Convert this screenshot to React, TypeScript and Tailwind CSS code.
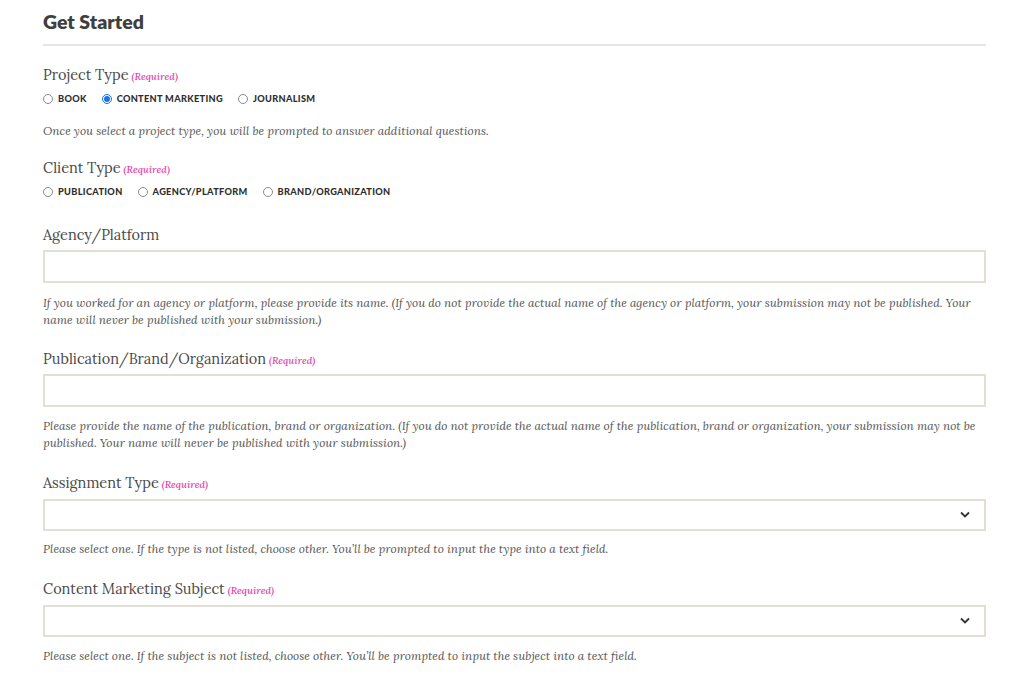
import React from 'react';

const serif = "font-['Lora','DejaVu_Serif','Liberation_Serif',serif]";

const Required = () => (
  <span className="ml-[3px] text-[10px] leading-[10px] italic font-medium text-[#e53aa6]">(Required)</span>
);

const Radio = ({ label, checked }: { label: string; checked?: boolean }) => (
  <label className="flex items-center mr-[15px]">
    <span
      className={`w-[10px] h-[10px] rounded-full border flex items-center justify-center mr-[5px] ${
        checked ? 'border-[#1a73e8]' : 'border-[#8a8a8a]'
      }`}
    >
      {checked && <span className="w-[6px] h-[6px] rounded-full bg-[#1a73e8]" />}
    </span>
    <span className="text-[9.2px] font-black tracking-[0.035em] text-[#2e2e2e] uppercase font-['Lato',sans-serif]">
      {label}
    </span>
  </label>
);

const Label = ({ text, required }: { text: string; required?: boolean }) => (
  <div className={`${serif} text-[14.5px] text-[#4a4a4a] leading-[20px] flex items-baseline`}>
    {text}
    {required && <Required />}
  </div>
);

const Help = ({ children }: { children: React.ReactNode }) => (
  <p className={`${serif} italic text-[11.8px] leading-[17px] text-[#555]`}>{children}</p>
);

const TextInput = () => (
  <div className="h-[33px] border-2 border-[#e2e0d6] bg-white" />
);

const Select = () => (
  <div className="h-[32px] border-2 border-[#e2e0d6] bg-white flex items-center justify-end pr-[14px]">
    <svg width="10" height="7" viewBox="0 0 10 7" fill="none">
      <path d="M1 1.5l4 4 4-4" stroke="#333" strokeWidth="1.8" />
    </svg>
  </div>
);

export default function App() {
  return (
    <div className="w-[1024px] h-[680px] bg-white overflow-hidden px-[43px]">
      <div className="w-[943px]">
        <h2 className="pt-[11px] pb-[11px] text-[19.5px] font-extrabold text-[#3f3f3f] leading-[22px] font-['Lato',sans-serif]">
          Get Started
        </h2>
        <div className="border-t-2 border-[#e5e5e5]" />

        <div className="mt-[19px]">
          <Label text="Project Type" required />
          <div className="flex mt-[7px]">
            <Radio label="Book" />
            <Radio label="Content Marketing" checked />
            <Radio label="Journalism" />
          </div>
          <div className="mt-[16px]">
            <Help>Once you select a project type, you will be prompted to answer additional questions.</Help>
          </div>
        </div>

        <div className="mt-[19px]">
          <Label text="Client Type" required />
          <div className="flex mt-[7px]">
            <Radio label="Publication" />
            <Radio label="Agency/Platform" />
            <Radio label="Brand/Organization" />
          </div>
        </div>

        <div className="mt-[26px]">
          <Label text="Agency/Platform" />
          <div className="mt-[5px]">
            <TextInput />
          </div>
          <div className="mt-[11px]">
            <Help>
              If you worked for an agency or platform, please provide its name. (If you do not provide the actual name of the
              agency or platform, your submission may not be published. Your name will never be published with your
              submission.)
            </Help>
          </div>
        </div>

        <div className="mt-[21px]">
          <Label text="Publication/Brand/Organization" required />
          <div className="mt-[5px]">
            <TextInput />
          </div>
          <div className="mt-[10px]">
            <Help>
              Please provide the name of the publication, brand or organization. (If you do not provide the actual name of
              the publication, brand or organization, your submission may not be published. Your name will never be
              published with your submission.)
            </Help>
          </div>
        </div>

        <div className="mt-[22px]">
          <Label text="Assignment Type" required />
          <div className="mt-[6px]">
            <Select />
          </div>
          <div className="mt-[9px]">
            <Help>Please select one. If the type is not listed, choose other. You’ll be prompted to input the type into a text field.</Help>
          </div>
        </div>

        <div className="mt-[22px]">
          <Label text="Content Marketing Subject" required />
          <div className="mt-[6px]">
            <Select />
          </div>
          <div className="mt-[10px]">
            <Help>Please select one. If the subject is not listed, choose other. You’ll be prompted to input the subject into a text field.</Help>
          </div>
        </div>
      </div>
    </div>
  );
}
